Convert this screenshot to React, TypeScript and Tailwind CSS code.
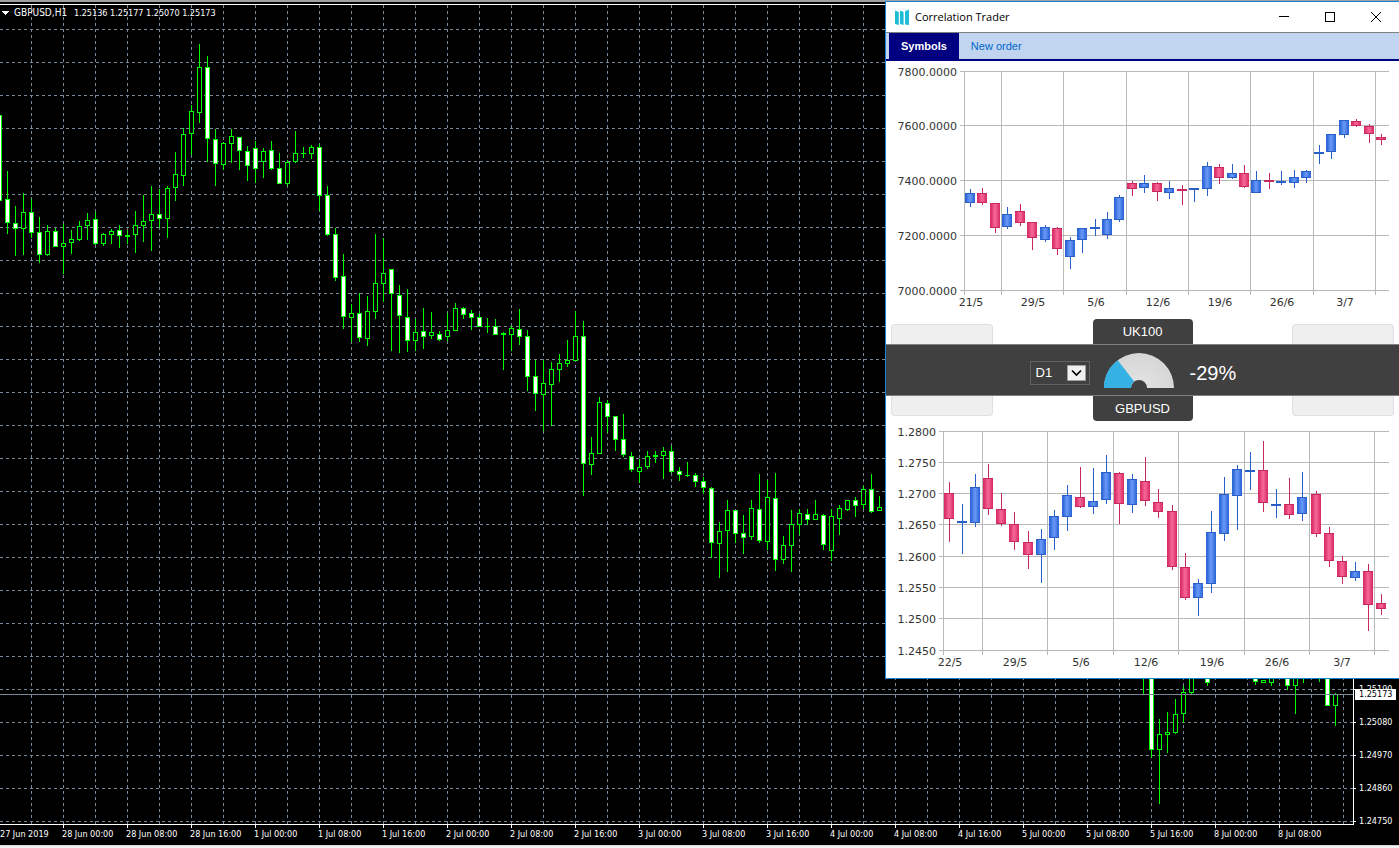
type Candle = [top: number, bottom: number, high: number, low: number, down?: 1];

// GBPUSD H1, one bar every 8px starting half off the left edge
const hourly: Candle[] = [
  [115, 201, 115, 201, 1], [199, 223, 171, 234, 1], [223, 229, 206, 256, 1], [212, 229, 193, 255],
  [212, 233, 199, 238, 1], [232, 255, 217, 263, 1], [231, 255, 225, 256], [231, 247, 228, 247, 1],
  [243, 247, 224, 274], [239, 243, 230, 254], [226, 240, 221, 241], [220, 226, 213, 240],
  [219, 244, 212, 245, 1], [234, 244, 233, 246], [231, 235, 229, 244], [230, 236, 225, 248, 1],
  [235, 237, 230, 244], [225, 235, 211, 253], [221, 226, 195, 242], [214, 221, 186, 251],
  [214, 219, 189, 228, 1], [188, 219, 186, 238], [174, 188, 152, 201], [134, 176, 128, 186],
  [111, 134, 105, 155], [67, 113, 44, 123], [67, 139, 56, 162, 1], [139, 164, 129, 186, 1],
  [143, 165, 142, 170], [136, 144, 129, 163], [137, 151, 137, 170, 1], [151, 166, 146, 181, 1],
  [148, 169, 141, 183, 1], [151, 162, 148, 178], [150, 169, 141, 170, 1], [168, 184, 153, 184, 1],
  [162, 184, 160, 186], [153, 162, 131, 163], [153, 154, 147, 158], [147, 154, 145, 159],
  [147, 196, 144, 211, 1], [195, 235, 186, 236, 1], [234, 278, 228, 281, 1], [276, 317, 254, 329, 1],
  [313, 318, 304, 342], [313, 338, 293, 342, 1], [311, 339, 296, 346], [283, 312, 234, 319],
  [273, 284, 238, 302], [269, 294, 269, 351, 1], [295, 316, 285, 353, 1], [317, 341, 289, 352, 1],
  [332, 341, 319, 351], [331, 337, 308, 349, 1], [332, 336, 312, 339], [334, 340, 331, 341, 1],
  [330, 337, 313, 341], [308, 331, 303, 331], [308, 315, 307, 319, 1], [313, 318, 310, 330, 1],
  [317, 327, 314, 327, 1], [326, 327, 318, 333], [326, 335, 319, 335, 1], [333, 335, 332, 370],
  [328, 335, 326, 351], [329, 337, 309, 345, 1], [336, 377, 330, 391, 1], [376, 394, 360, 411, 1],
  [383, 395, 360, 431], [369, 385, 362, 426], [363, 370, 354, 382], [360, 364, 340, 367],
  [336, 361, 311, 361], [336, 464, 321, 496, 1], [453, 465, 437, 475], [402, 454, 397, 454],
  [403, 417, 400, 433, 1], [416, 440, 416, 451, 1], [439, 455, 414, 457, 1], [456, 470, 452, 472, 1],
  [467, 472, 459, 483], [456, 467, 451, 469], [455, 457, 451, 463], [451, 456, 447, 479],
  [451, 472, 446, 473, 1], [471, 475, 467, 481, 1], [475, 476, 462, 477], [475, 482, 473, 487, 1],
  [481, 488, 477, 494, 1], [488, 543, 487, 558, 1], [531, 544, 522, 578], [510, 531, 500, 572],
  [510, 534, 510, 543, 1], [533, 538, 515, 554, 1], [508, 537, 500, 540], [509, 541, 474, 543, 1],
  [497, 542, 480, 550], [498, 560, 473, 571, 1], [545, 560, 536, 564], [524, 546, 510, 572],
  [513, 525, 509, 535], [514, 520, 509, 525, 1], [514, 520, 500, 520], [515, 545, 514, 550, 1],
  [516, 551, 509, 561], [508, 519, 505, 535], [500, 510, 500, 511], [500, 506, 497, 517, 1],
  [489, 505, 486, 509], [489, 512, 474, 513, 1], [507, 511, 496, 511],
];

// later bars, only partly visible under the trader window
const recent: [bar: number, candle: Candle][] = [
  [143, [660, 661, 660, 694]],
  [144, [660, 750, 660, 758, 1]],
  [145, [734, 750, 719, 804]],
  [146, [732, 735, 712, 753]],
  [147, [714, 733, 699, 734]],
  [148, [692, 714, 686, 723]],
  [149, [660, 693, 660, 694]],
  [151, [660, 683, 660, 686, 1]],
  [157, [660, 682, 660, 685, 1]],
  [158, [680, 683, 680, 683]],
  [159, [660, 683, 660, 686]],
  [161, [660, 686, 660, 690, 1]],
  [162, [660, 686, 660, 714]],
  [163, [660, 661, 660, 683]],
  [165, [660, 661, 660, 682]],
  [166, [660, 706, 660, 706, 1]],
  [167, [694, 706, 693, 726]],
];

const uk100: Candle[] = [
  [132, 142, 128, 146], [132, 142, 127, 144, 1], [142, 167, 142, 172, 1], [153, 166, 146, 168],
  [150, 162, 143, 165, 1], [161, 177, 161, 189, 1], [166, 179, 164, 181], [167, 188, 166, 194, 1],
  [179, 196, 176, 208], [167, 179, 167, 192], [166, 168, 158, 175], [158, 174, 151, 178],
  [136, 159, 134, 161], [122, 128, 120, 135, 1], [122, 127, 114, 132], [122, 131, 121, 140, 1],
  [127, 132, 120, 138], [128, 130, 124, 144, 1], [127, 129, 127, 141], [105, 128, 101, 135],
  [106, 117, 103, 123, 1], [112, 117, 103, 118], [112, 126, 104, 127, 1], [119, 132, 110, 132],
  [119, 121, 112, 128, 1], [120, 122, 110, 124], [116, 122, 109, 127], [110, 117, 109, 122],
  [91, 93, 84, 103], [73, 91, 73, 98], [59, 74, 59, 77], [60, 65, 58, 66, 1],
  [65, 73, 63, 82, 1], [76, 79, 73, 84, 1],
];

const gbpusd: Candle[] = [
  [72, 98, 61, 121, 1], [100, 102, 83, 133], [66, 102, 53, 106], [57, 88, 43, 94, 1],
  [88, 103, 72, 105, 1], [103, 121, 91, 129, 1], [121, 134, 110, 148, 1], [118, 134, 108, 162],
  [95, 117, 89, 129], [74, 96, 64, 110], [76, 86, 46, 87, 1], [80, 86, 47, 93],
  [51, 79, 34, 83], [52, 83, 51, 103, 1], [58, 84, 53, 92], [60, 80, 36, 85, 1],
  [81, 91, 68, 97, 1], [90, 146, 84, 149, 1], [146, 177, 132, 179, 1], [162, 177, 158, 195],
  [111, 163, 90, 172], [73, 113, 56, 120], [48, 75, 44, 109], [49, 51, 31, 69],
  [49, 82, 20, 91, 1], [83, 85, 68, 97], [83, 94, 57, 98, 1], [76, 93, 51, 100],
  [73, 113, 70, 116, 1], [112, 140, 106, 146, 1], [140, 156, 135, 163, 1], [150, 157, 141, 160],
  [150, 184, 143, 210, 1], [182, 188, 173, 194, 1],
];

const times = [
  "27 Jun 2019", "28 Jun 00:00", "28 Jun 08:00", "28 Jun 16:00", "1 Jul 00:00", "1 Jul 08:00", "1 Jul 16:00",
  "2 Jul 00:00", "2 Jul 08:00", "2 Jul 16:00", "3 Jul 00:00", "3 Jul 08:00", "3 Jul 16:00", "4 Jul 00:00",
  "4 Jul 08:00", "4 Jul 16:00", "5 Jul 00:00", "5 Jul 08:00", "5 Jul 16:00", "8 Jul 00:00", "8 Jul 08:00",
];

const prices = ["1.25190", "1.25080", "1.24970", "1.24860", "1.24750"];

function HourlyBar({ bar, candle }: { bar: number; candle: Candle }) {
  const [top, bottom, high, low, down] = candle;
  const x = bar * 8 - 1;
  return (
    <g>
      <rect x={x} y={high} width={1} height={low - high} fill="#00ff00" />
      <rect x={x - 2} y={top} width={5} height={bottom - top} fill="#00ff00" />
      {bottom - top > 2 && (
        <rect x={x - 1} y={top + 1} width={3} height={bottom - top - 2} fill={down ? "#ffffff" : "#000000"} />
      )}
    </g>
  );
}

function Terminal() {
  const rows = Array.from({ length: 25 }, (_, i) => 29 + i * 33);
  const cols = Array.from({ length: 42 }, (_, i) => 31 + i * 32);

  return (
    <main className="flex min-h-screen flex-col bg-black font-['DejaVu_Sans_Condensed','DejaVu_Sans',sans-serif] text-[9px] text-white">
      <div className="h-1 border-t-2 border-[#a0a0a0] bg-black" />
      <div className="flex flex-1 border-t border-white">
        <div className="flex min-w-0 flex-1 flex-col">
          <div className="relative min-h-[820px] flex-1 border-r border-b border-white">
            <svg className="absolute inset-0 h-full w-full" shapeRendering="crispEdges" aria-label="GBPUSD H1 chart">
              <g transform="translate(0 -5)">
                <g stroke="#778899" strokeDasharray="3 3">
                  {rows.map((y) => (
                    <line key={y} x1={0} x2="100%" y1={y + 0.5} y2={y + 0.5} />
                  ))}
                  {cols.map((x) => (
                    <line key={x} x1={x + 0.5} x2={x + 0.5} y1={5} y2={824} />
                  ))}
                </g>
                {hourly.map((candle, i) => (
                  <HourlyBar key={i} bar={i} candle={candle} />
                ))}
                {recent.map(([bar, candle]) => (
                  <HourlyBar key={bar} bar={bar} candle={candle} />
                ))}
                <rect x={0} y={694} width="100%" height={1} fill="#778899" />
              </g>
            </svg>
            <h1 className="relative flex items-center pt-px pl-[2px] leading-[14px]">
              <svg className="mr-1" width="8" height="4" viewBox="0 0 8 4" fill="currentColor" shapeRendering="crispEdges">
                <path d="M0 0h7v1h-1v1h-1v1h-1v1h-1v-1h-1v-1h-1v-1h-1z" />
              </svg>
              <span className="w-[60px] text-[10px]">GBPUSD,H1</span>
              <span>1.25136 1.25177 1.25070 1.25173</span>
            </h1>
          </div>
          <div className="flex h-5 overflow-hidden">
            {times.map((time, i) => (
              <div key={time} className={i === 0 ? "w-[63px] shrink-0 pt-[3px]" : "w-16 shrink-0"}>
                {i > 0 && <div className="h-[3px] w-px bg-white" />}
                <div className={i === 0 ? "leading-3 whitespace-nowrap" : "-ml-px leading-3 whitespace-nowrap"}>{time}</div>
              </div>
            ))}
          </div>
        </div>
        <div className="relative flex w-[45px] flex-col justify-end pb-[7px]">
          {prices.map((price) => (
            <div key={price} className="flex h-[33px] items-center gap-[3px]">
              <span className="h-px w-[2px] bg-white" />
              {price}
            </div>
          ))}
          <span className="absolute bottom-[145px] left-px w-[41px] bg-white pl-1 leading-[11px] text-black">
            1.25173
          </span>
        </div>
      </div>
      <footer className="h-[3px] border-t border-[#d9d9d9] bg-[#f0f0f0]" />
    </main>
  );
}

interface PriceChartProps {
  name: string;
  candles: Candle[];
  left: number;
  step: number;
  rows: [y: number, label: string][];
  cols: number[];
  days: [x: number, label: string][];
}

function PriceChart({ name, candles, left, step, rows, cols, days }: PriceChartProps) {
  return (
    <svg className="block h-[257px] w-full font-['DejaVu_Sans',sans-serif] text-[11px]" aria-label={name}>
      <defs>
        <linearGradient id={`${name}-up`}>
          <stop offset="0.1" stopColor="#2e66d8" />
          <stop offset="0.5" stopColor="#6a9af8" />
          <stop offset="0.95" stopColor="#2e66d8" />
        </linearGradient>
        <linearGradient id={`${name}-down`}>
          <stop offset="0.1" stopColor="#d92f66" />
          <stop offset="0.5" stopColor="#f8689a" />
          <stop offset="0.95" stopColor="#d92f66" />
        </linearGradient>
      </defs>
      <g fill="#b8b8b8" shapeRendering="crispEdges">
        {rows.map(([y]) => (
          <rect key={y} x={left - 4} y={y} width={503 - left + 4} height={1} />
        ))}
        {cols.map((x) => (
          <rect key={x} x={x} y={10} width={1} height={224} />
        ))}
      </g>
      <g fill="#333333">
        {rows.map(([y, label]) => (
          <text key={label} x={left - 7} y={y + 5} textAnchor="end">{label}</text>
        ))}
        {days.map(([x, label]) => (
          <text key={label} x={x} y={245} textAnchor="middle">{label}</text>
        ))}
      </g>
      <g shapeRendering="crispEdges">
        {candles.map(([top, bottom, high, low, down], i) => {
          const x = Math.round(left + 1 + i * step);
          const edge = down ? "#c9285c" : "#2860c8";
          return (
            <g key={i}>
              <rect x={x + 5} y={high} width={1} height={low - high} fill={edge} />
              <rect x={x} y={top} width={10} height={bottom - top} fill={edge} />
              {bottom - top > 2 && (
                <rect x={x} y={top + 1} width={10} height={bottom - top - 2} fill={`url(#${name}-${down ? "down" : "up"})`} />
              )}
            </g>
          );
        })}
      </g>
    </svg>
  );
}

function TitleBar() {
  return (
    <header className="flex h-[31px] items-center border-b border-[#808080] pl-2">
      <svg width="16" height="16" viewBox="0 0 16 16" fill="#1fbcd8" aria-hidden="true">
        <path d="M1 1.500L4.800 3v13L1 15z" />
        <path d="M6 1.500L9.600 3v13L6 15z" />
        <path d="M11 2.200L15 .500v15.500l-4-.500z" />
      </svg>
      <span className="ml-[5px] flex-1 font-['Open_Sans','Noto_Sans',sans-serif] text-[11px] text-black">
        Correlation Trader
      </span>
      <button className="grid h-[30px] w-[46px] place-items-center" aria-label="Minimize">
        <svg width="10" height="10" shapeRendering="crispEdges"><path d="M0 4.500h10" stroke="#000" /></svg>
      </button>
      <button className="grid h-[30px] w-[46px] place-items-center" aria-label="Maximize">
        <svg width="10" height="10" shapeRendering="crispEdges"><path d="M.5.500h9v9h-9z" stroke="#000" fill="none" /></svg>
      </button>
      <button className="grid h-[30px] w-[46px] place-items-center" aria-label="Close">
        <svg width="10" height="10"><path d="M0 0l10 10M10 0L0 10" stroke="#000" /></svg>
      </button>
    </header>
  );
}

function Gauge() {
  return (
    <svg width="70" height="35" viewBox="0 0 70 35" className="ml-[14px]" aria-label="Correlation gauge">
      <defs>
        <radialGradient id="rest" cx="35" cy="35" r="35" gradientUnits="userSpaceOnUse">
          <stop offset="0.3" stopColor="#e0e0e0" />
          <stop offset="1" stopColor="#d6d6d6" />
        </radialGradient>
      </defs>
      <path d="M0 35A35 35 0 0 1 70 35H43A8 8 0 0 0 27 35z" fill="url(#rest)" />
      <path d="M0 35A35 35 0 0 1 13.700 7.200L30.200 28.600A8 8 0 0 0 27 35z" fill="#35b2e3" />
    </svg>
  );
}

function CorrelationBar() {
  return (
    <section className="mt-px font-['Liberation_Sans',Arial,sans-serif] text-[13px] text-white">
      <div className="flex items-end justify-between px-[5px]">
        <button className="h-5 w-[102px] rounded-t border border-b-0 border-[#dfdfdf] bg-[#efefef]" aria-label="Previous first symbol" />
        <button className="h-[25px] w-[100px] rounded-t bg-[#404040]">UK100</button>
        <button className="h-5 w-[102px] rounded-t border border-b-0 border-[#dfdfdf] bg-[#efefef]" aria-label="Next first symbol" />
      </div>
      <div className="flex h-[52px] items-center justify-center border-y border-[#808080] bg-[#404040]">
        <div className="relative mt-[6px] h-6 w-[60px]">
          <select className="h-6 w-[60px] appearance-none border border-[#626262] bg-[#404040] pl-[5px]" aria-label="Timeframe">
            <option>D1</option>
          </select>
          <svg className="pointer-events-none absolute top-1 right-1" width="19" height="16" viewBox="0 0 19 16">
            <path d="M.5.500h18v15H.5z" fill="#f0f0f0" stroke="#a0a0a0" />
            <path d="M5 5.500l4.500 4.500L14 5.500" stroke="#000" strokeWidth="1.700" fill="none" />
          </svg>
        </div>
        <Gauge />
        <output className="ml-4 w-[66px] pt-[6px] text-xl">-29%</output>
      </div>
      <div className="flex items-start justify-between px-[5px]">
        <button className="h-5 w-[102px] rounded-b border border-t-0 border-[#dfdfdf] bg-[#efefef]" aria-label="Previous second symbol" />
        <button className="h-[25px] w-[100px] rounded-b bg-[#404040]">GBPUSD</button>
        <button className="h-5 w-[102px] rounded-b border border-t-0 border-[#dfdfdf] bg-[#efefef]" aria-label="Next second symbol" />
      </div>
    </section>
  );
}

export default function App() {
  return (
    <div className="relative overflow-hidden">
      <Terminal />
      {/* Floating trader window, docked at the top right */}
      <div className="absolute top-px right-0 w-[514px] border-y border-l border-[#1883d7] bg-white">
        <TitleBar />
        <nav className="flex h-7 border-b-2 border-[#000080] bg-[#c2d5f0] pl-[3px] font-['Liberation_Sans',Arial,sans-serif] text-[11px]">
          <button className="bg-[#000080] px-3 font-bold text-white">Symbols</button>
          <button className="px-3 text-[#0066cc]">New order</button>
        </nav>
        <PriceChart
          name="uk100"
          candles={uk100}
          left={78}
          step={12.455}
          rows={[[10, "7800.0000"], [64, "7600.0000"], [119, "7400.0000"], [174, "7200.0000"], [229, "7000.0000"]]}
          cols={[78, 115, 177, 240, 302, 364, 427, 489]}
          days={[[85, "21/5"], [147, "29/5"], [210, "5/6"], [272, "12/6"], [334, "19/6"], [396, "26/6"], [459, "3/7"]]}
        />
        <CorrelationBar />
        <PriceChart
          name="gbpusd"
          candles={gbpusd}
          left={57}
          step={13.09}
          rows={[
            [10, "1.2800"], [41, "1.2750"], [72, "1.2700"], [103, "1.2650"],
            [135, "1.2600"], [166, "1.2550"], [197, "1.2500"], [229, "1.2450"],
          ]}
          cols={[57, 96, 161, 227, 292, 358, 423, 488]}
          days={[[64, "22/5"], [129, "29/5"], [195, "5/6"], [260, "12/6"], [326, "19/6"], [391, "26/6"], [456, "3/7"]]}
        />
      </div>
    </div>
  );
}
